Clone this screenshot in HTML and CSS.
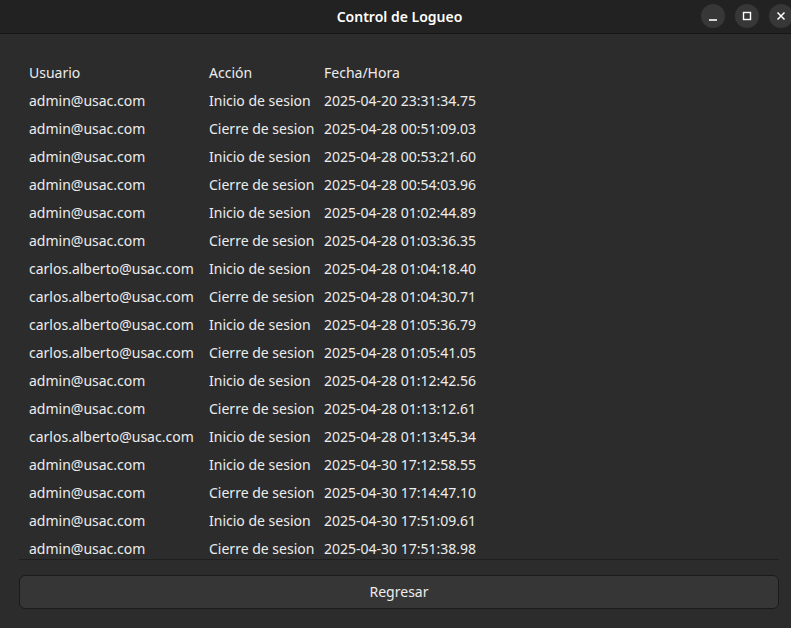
FILE: index.html
```html
<!DOCTYPE html>
<html lang="es">
<head>
<meta charset="utf-8">
<title>Control de Logueo</title>
<link rel="stylesheet" href="styles.css">
</head>
<body>
<div class="window">
  <header class="titlebar">
    <div class="title">Control de Logueo</div>
    <div class="controls">
      <span class="ctl"><svg width="24" height="24" viewBox="0 0 24 24"><line x1="8" y1="16" x2="16" y2="16" stroke="#fff" stroke-width="1.6"/></svg></span>
      <span class="ctl"><svg width="24" height="24" viewBox="0 0 24 24"><rect x="8.5" y="8.5" width="7" height="7" fill="none" stroke="#fff" stroke-width="1.4"/></svg></span>
      <span class="ctl"><svg width="24" height="24" viewBox="0 0 24 24"><path d="M8.5 8.5 L15.5 15.5 M15.5 8.5 L8.5 15.5" stroke="#fff" stroke-width="1.5"/></svg></span>
    </div>
  </header>
  <main class="content">
    <div class="list">
      <div class="grid">
        <div class="row head"><span>Usuario</span><span>Acción</span><span>Fecha/Hora</span></div>
        <div class="row"><span>admin@usac.com</span><span>Inicio de sesion</span><span>2025-04-20 23:31:34.75</span></div>
        <div class="row"><span>admin@usac.com</span><span>Cierre de sesion</span><span>2025-04-28 00:51:09.03</span></div>
        <div class="row"><span>admin@usac.com</span><span>Inicio de sesion</span><span>2025-04-28 00:53:21.60</span></div>
        <div class="row"><span>admin@usac.com</span><span>Cierre de sesion</span><span>2025-04-28 00:54:03.96</span></div>
        <div class="row"><span>admin@usac.com</span><span>Inicio de sesion</span><span>2025-04-28 01:02:44.89</span></div>
        <div class="row"><span>admin@usac.com</span><span>Cierre de sesion</span><span>2025-04-28 01:03:36.35</span></div>
        <div class="row"><span>carlos.alberto@usac.com</span><span>Inicio de sesion</span><span>2025-04-28 01:04:18.40</span></div>
        <div class="row"><span>carlos.alberto@usac.com</span><span>Cierre de sesion</span><span>2025-04-28 01:04:30.71</span></div>
        <div class="row"><span>carlos.alberto@usac.com</span><span>Inicio de sesion</span><span>2025-04-28 01:05:36.79</span></div>
        <div class="row"><span>carlos.alberto@usac.com</span><span>Cierre de sesion</span><span>2025-04-28 01:05:41.05</span></div>
        <div class="row"><span>admin@usac.com</span><span>Inicio de sesion</span><span>2025-04-28 01:12:42.56</span></div>
        <div class="row"><span>admin@usac.com</span><span>Cierre de sesion</span><span>2025-04-28 01:13:12.61</span></div>
        <div class="row"><span>carlos.alberto@usac.com</span><span>Inicio de sesion</span><span>2025-04-28 01:13:45.34</span></div>
        <div class="row"><span>admin@usac.com</span><span>Inicio de sesion</span><span>2025-04-30 17:12:58.55</span></div>
        <div class="row"><span>admin@usac.com</span><span>Cierre de sesion</span><span>2025-04-30 17:14:47.10</span></div>
        <div class="row"><span>admin@usac.com</span><span>Inicio de sesion</span><span>2025-04-30 17:51:09.61</span></div>
        <div class="row"><span>admin@usac.com</span><span>Cierre de sesion</span><span>2025-04-30 17:51:38.98</span></div>
      </div>
    </div>
    <button class="btn" type="button">Regresar</button>
  </main>
</div>
</body>
</html>
```

FILE: styles.css
```css
html, body {
  margin: 0;
  padding: 0;
  background: #2c2c2c;
}
body {
  width: 791px;
  height: 628px;
  overflow: hidden;
  font-family: "Noto Sans", "Open Sans", sans-serif;
  font-size: 14px;
  color: #ececec;
}
.window {
  display: flex;
  flex-direction: column;
  height: 628px;
}
.titlebar {
  height: 33px;
  background: #222222;
  border-bottom: 1px solid #161616;
  display: flex;
  align-items: center;
  justify-content: center;
  position: relative;
}
.title {
  font-weight: 600;
  font-size: 14px;
  color: #ffffff;
  margin-left: 8px;
}
.controls {
  position: absolute;
  right: -2px;
  top: 4px;
  display: flex;
  gap: 10px;
}
.ctl {
  width: 24px;
  height: 24px;
  border-radius: 50%;
  background: #373737;
  display: flex;
}
.content {
  padding: 0 12px 0 19px;
  display: flex;
  flex-direction: column;
}
.list {
  border-bottom: 1px solid #1f1f1f;
  overflow: hidden;
  padding: 24px 0 0 10px;
  box-sizing: border-box;
  height: 526px;
}
.grid {
  display: flex;
  flex-direction: column;
}
.row {
  display: grid;
  grid-template-columns: 180px 115px auto;
  height: 28px;
  align-items: center;
  white-space: nowrap;
}
.btn {
  margin-top: 15px;
  height: 34px;
  background: #363636;
  border: 1px solid #1b1b1b;
  border-radius: 6px;
  color: #ececec;
  font-family: inherit;
  font-size: 14px;
  padding: 0 0 2px 0;
  width: 760px;
}
```
